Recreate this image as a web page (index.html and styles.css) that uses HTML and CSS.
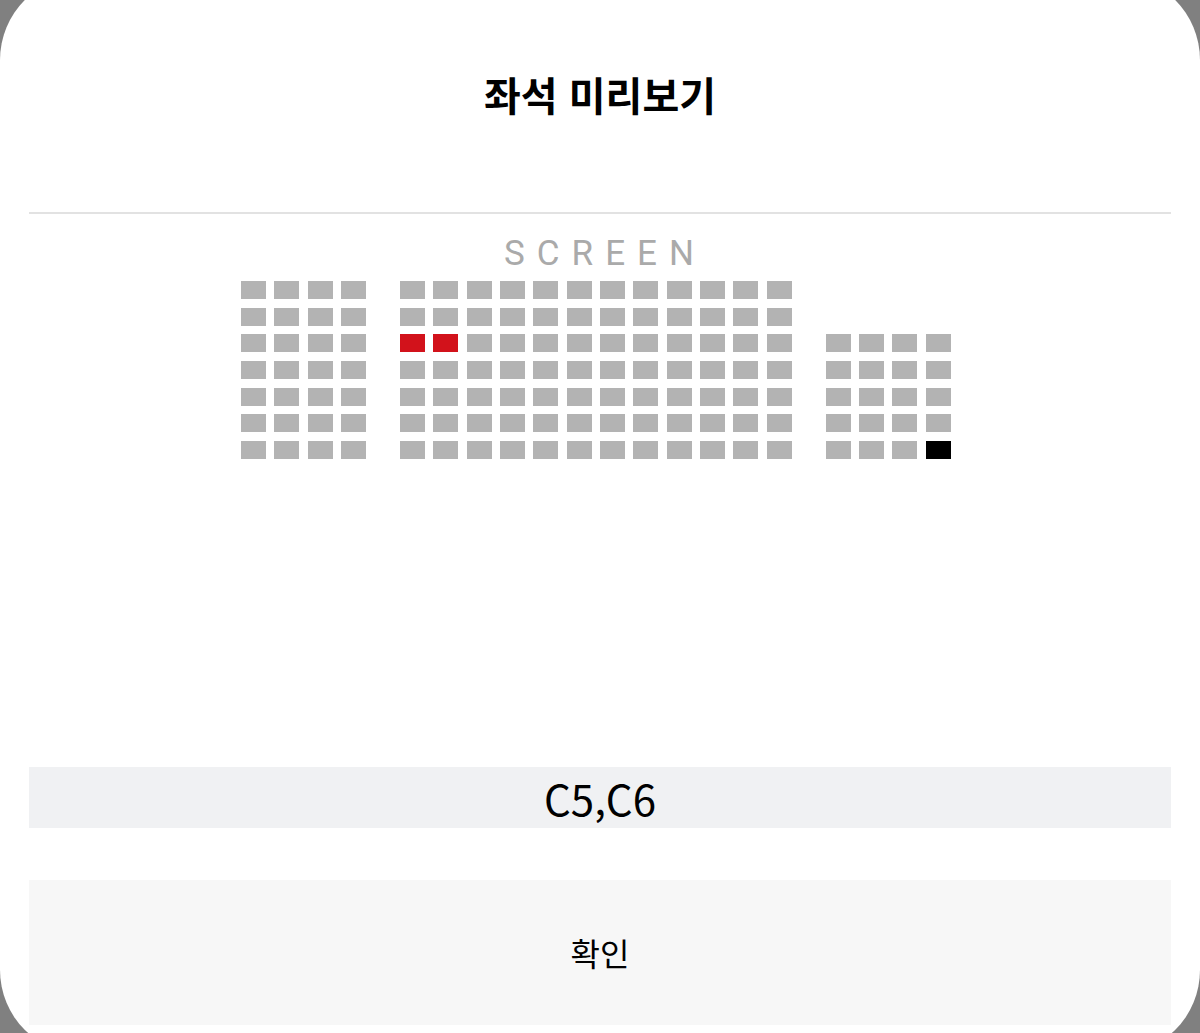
FILE: index.html
```html
<!DOCTYPE html>
<html lang="ko">

<head>
  <meta charset="UTF-8">
  <meta name="viewport" content="width=device-width, initial-scale=1.0">
  <title>좌석 미리보기</title>
  <link rel="stylesheet" href="styles.css">
</head>

<body>
  <div class="sheet">
    <div class="title">좌석 미리보기</div>
    <div class="screen">SCREEN</div>

    <div class="seatmap">
      <!-- 왼쪽 -->
      <div class="block">
        <span class="seat"></span><span class="seat"></span><span class="seat"></span><span class="seat"></span>
        <span class="seat"></span><span class="seat"></span><span class="seat"></span><span class="seat"></span>
        <span class="seat"></span><span class="seat"></span><span class="seat"></span><span class="seat"></span>
        <span class="seat"></span><span class="seat"></span><span class="seat"></span><span class="seat"></span>
        <span class="seat"></span><span class="seat"></span><span class="seat"></span><span class="seat"></span>
        <span class="seat"></span><span class="seat"></span><span class="seat"></span><span class="seat"></span>
        <span class="seat"></span><span class="seat"></span><span class="seat"></span><span class="seat"></span>
      </div>
      <!-- 가운데 -->
      <div class="block wide">
        <span class="seat"></span><span class="seat"></span><span class="seat"></span><span class="seat"></span><span class="seat"></span><span class="seat"></span><span class="seat"></span><span class="seat"></span><span class="seat"></span><span class="seat"></span><span class="seat"></span><span class="seat"></span>
        <span class="seat"></span><span class="seat"></span><span class="seat"></span><span class="seat"></span><span class="seat"></span><span class="seat"></span><span class="seat"></span><span class="seat"></span><span class="seat"></span><span class="seat"></span><span class="seat"></span><span class="seat"></span>
        <span class="seat picked"></span><span class="seat picked"></span><span class="seat"></span><span class="seat"></span><span class="seat"></span><span class="seat"></span><span class="seat"></span><span class="seat"></span><span class="seat"></span><span class="seat"></span><span class="seat"></span><span class="seat"></span>
        <span class="seat"></span><span class="seat"></span><span class="seat"></span><span class="seat"></span><span class="seat"></span><span class="seat"></span><span class="seat"></span><span class="seat"></span><span class="seat"></span><span class="seat"></span><span class="seat"></span><span class="seat"></span>
        <span class="seat"></span><span class="seat"></span><span class="seat"></span><span class="seat"></span><span class="seat"></span><span class="seat"></span><span class="seat"></span><span class="seat"></span><span class="seat"></span><span class="seat"></span><span class="seat"></span><span class="seat"></span>
        <span class="seat"></span><span class="seat"></span><span class="seat"></span><span class="seat"></span><span class="seat"></span><span class="seat"></span><span class="seat"></span><span class="seat"></span><span class="seat"></span><span class="seat"></span><span class="seat"></span><span class="seat"></span>
        <span class="seat"></span><span class="seat"></span><span class="seat"></span><span class="seat"></span><span class="seat"></span><span class="seat"></span><span class="seat"></span><span class="seat"></span><span class="seat"></span><span class="seat"></span><span class="seat"></span><span class="seat"></span>
      </div>
      <!-- 오른쪽 -->
      <div class="block side">
        <span class="seat"></span><span class="seat"></span><span class="seat"></span><span class="seat"></span>
        <span class="seat"></span><span class="seat"></span><span class="seat"></span><span class="seat"></span>
        <span class="seat"></span><span class="seat"></span><span class="seat"></span><span class="seat"></span>
        <span class="seat"></span><span class="seat"></span><span class="seat"></span><span class="seat"></span>
        <span class="seat"></span><span class="seat"></span><span class="seat"></span><span class="seat sold"></span>
      </div>
    </div>

    <div class="picked-list">C5,C6</div>
    <div class="confirm">확인</div>
  </div>
</body>

</html>
```

FILE: styles.css
```css
* {
  padding: 0;
  margin: 0;
  box-sizing: border-box;
}

body {
  background-color: #808080;
  overflow: hidden;
  font-family: "Noto Sans CJK KR", "Noto Sans", sans-serif;
  color: #000000;
}

.sheet {
  margin-top: -25px;
  height: 1080px;
  padding: 0 29px 30px;
  background-color: #ffffff;
  border-radius: 85px;
  display: flex;
  flex-direction: column;
}

.title {
  height: 239px;
  padding-top: 94px;
  line-height: 50px;
  font-size: 40px;
  font-weight: 700;
  text-align: center;
  border-bottom: 2px solid #e2e2e2;
}

.screen {
  margin-top: 22px;
  font-family: Roboto, "Liberation Sans", sans-serif;
  font-size: 35px;
  line-height: 35px;
  letter-spacing: 12px;
  text-indent: 10px;
  color: #aaaaaa;
  text-align: center;
}

.seatmap {
  margin: 10px 0 0 212px;
  display: flex;
  gap: 34px;
}

.block {
  display: grid;
  grid-template-columns: repeat(4, 25px);
  column-gap: 8.33px;
  row-gap: 8.67px;
}

.block.wide {
  grid-template-columns: repeat(12, 25px);
}

.block.side {
  align-self: flex-end;
}

.seat {
  display: block;
  height: 18px;
  background-color: #b3b3b3;
}

.seat.picked {
  background-color: #d2121b;
}

.seat.sold {
  background-color: #000000;
}

.picked-list {
  margin-top: auto;
  height: 61px;
  line-height: 61px;
  font-size: 42px;
  text-align: center;
  background-color: #f0f1f3;
}

.confirm {
  margin-top: 52px;
  height: 145px;
  line-height: 145px;
  font-size: 32px;
  text-align: center;
  background-color: #f7f7f7;
}
```
